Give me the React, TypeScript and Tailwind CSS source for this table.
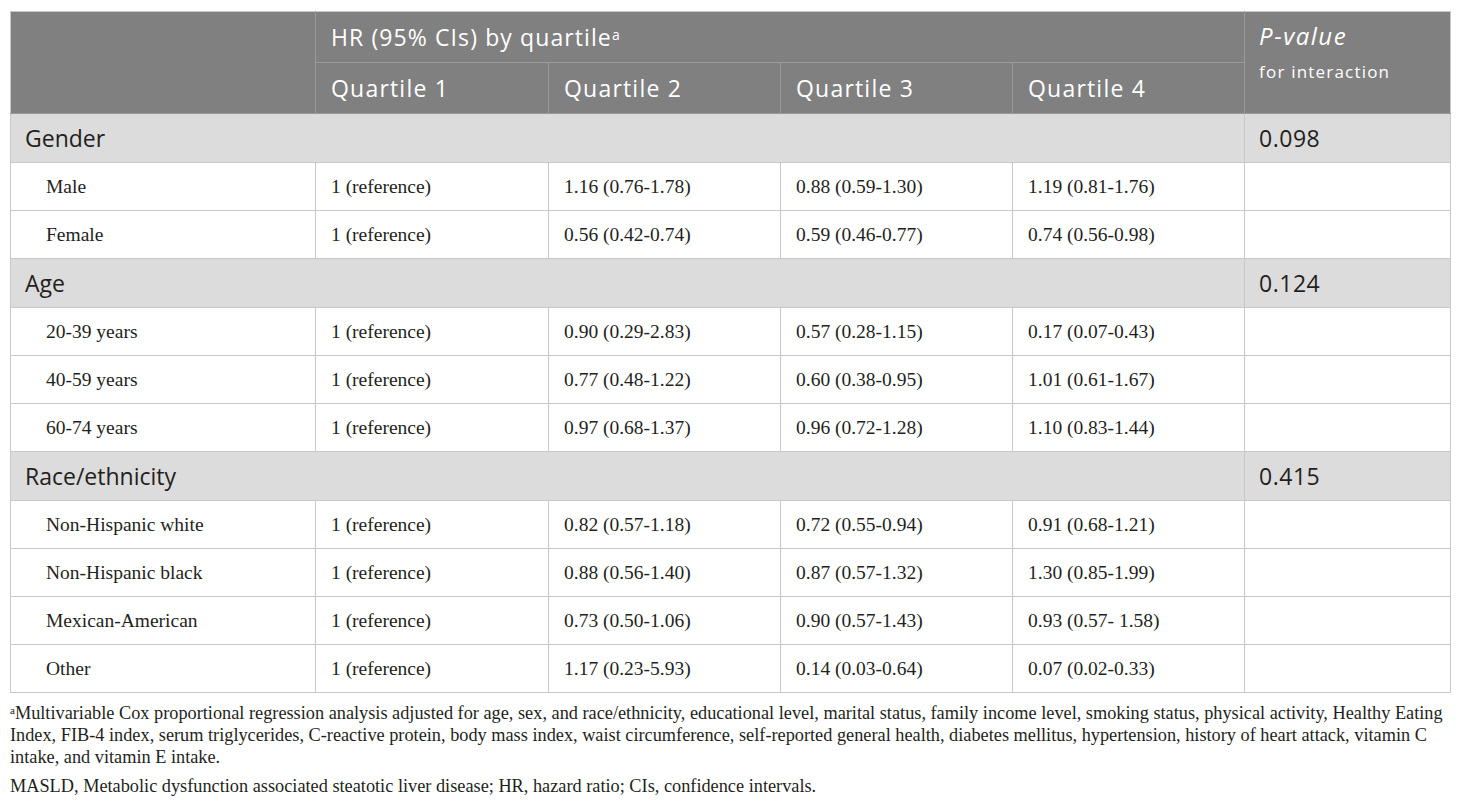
import React from 'react';

type Row = { label: string; q: [string, string, string, string] };
type Group = { name: string; p: string; rows: Row[] };

const groups: Group[] = [
  {
    name: 'Gender',
    p: '0.098',
    rows: [
      { label: 'Male', q: ['1 (reference)', '1.16 (0.76-1.78)', '0.88 (0.59-1.30)', '1.19 (0.81-1.76)'] },
      { label: 'Female', q: ['1 (reference)', '0.56 (0.42-0.74)', '0.59 (0.46-0.77)', '0.74 (0.56-0.98)'] },
    ],
  },
  {
    name: 'Age',
    p: '0.124',
    rows: [
      { label: '20-39 years', q: ['1 (reference)', '0.90 (0.29-2.83)', '0.57 (0.28-1.15)', '0.17 (0.07-0.43)'] },
      { label: '40-59 years', q: ['1 (reference)', '0.77 (0.48-1.22)', '0.60 (0.38-0.95)', '1.01 (0.61-1.67)'] },
      { label: '60-74 years', q: ['1 (reference)', '0.97 (0.68-1.37)', '0.96 (0.72-1.28)', '1.10 (0.83-1.44)'] },
    ],
  },
  {
    name: 'Race/ethnicity',
    p: '0.415',
    rows: [
      { label: 'Non-Hispanic white', q: ['1 (reference)', '0.82 (0.57-1.18)', '0.72 (0.55-0.94)', '0.91 (0.68-1.21)'] },
      { label: 'Non-Hispanic black', q: ['1 (reference)', '0.88 (0.56-1.40)', '0.87 (0.57-1.32)', '1.30 (0.85-1.99)'] },
      { label: 'Mexican-American', q: ['1 (reference)', '0.73 (0.50-1.06)', '0.90 (0.57-1.43)', '0.93 (0.57- 1.58)'] },
      { label: 'Other', q: ['1 (reference)', '1.17 (0.23-5.93)', '0.14 (0.03-0.64)', '0.07 (0.02-0.33)'] },
    ],
  },
];

const sans = "font-['Open_Sans','Noto_Sans',sans-serif]";
const serif = "font-['Liberation_Serif','Times_New_Roman',serif]";

export default function App() {
  return (
    <div className="min-h-screen bg-white pt-[11px] px-[10px] text-[#231f20]">
      <table className="table-fixed border-collapse w-[1440px]">
        <colgroup>
          <col className="w-[305px]" />
          <col className="w-[233px]" />
          <col className="w-[232px]" />
          <col className="w-[232px]" />
          <col className="w-[232px]" />
          <col className="w-[206px]" />
        </colgroup>
        <thead className={`${sans} text-white`}>
          <tr className="h-[51px] bg-[#808080]">
            <th rowSpan={2} className="border border-[#9a9a9a] border-t-[#c8c8c8] border-l-[#c8c8c8]" />
            <th colSpan={4} className="border border-[#9a9a9a] border-t-[#c8c8c8] px-[15px] text-left align-middle text-[23px] tracking-[1.1px] font-normal">
              HR (95% CIs) by quartile<sup className="text-[14px] tracking-normal relative -top-[6px]">a</sup>
            </th>
            <th rowSpan={2} className="border border-[#9a9a9a] border-t-[#c8c8c8] border-r-[#c8c8c8] px-[14px] pt-[10px] text-left align-top font-normal">
              <div className="text-[24px] italic tracking-[1.5px] leading-[28px]">P-value</div>
              <div className="text-[17px] tracking-[1.2px] leading-[22px] mt-[11px]">for interaction</div>
            </th>
          </tr>
          <tr className="h-[51px] bg-[#808080]">
            {['Quartile 1', 'Quartile 2', 'Quartile 3', 'Quartile 4'].map((q) => (
              <th key={q} className="border border-[#9a9a9a] px-[15px] text-left text-[23px] tracking-[1.2px] font-normal">
                {q}
              </th>
            ))}
          </tr>
        </thead>
        <tbody>
          {groups.map((g) => (
            <React.Fragment key={g.name}>
              <tr className={`h-[49px] bg-[#dcdcdc] ${sans} text-[23px]`}>
                <td colSpan={5} className="border border-[#c8c8c8] px-[14px]">
                  {g.name}
                </td>
                <td className="border border-[#c8c8c8] px-[14px] tracking-[0.5px]">{g.p}</td>
              </tr>
              {g.rows.map((r) => (
                <tr key={r.label} className={`h-[48px] ${serif} text-[19.5px]`}>
                  <td className="border border-[#c8c8c8] pl-[35px]">{r.label}</td>
                  {r.q.map((v, i) => (
                    <td key={i} className="border border-[#c8c8c8] px-[15px]">
                      {v}
                    </td>
                  ))}
                  <td className="border border-[#c8c8c8]" />
                </tr>
              ))}
            </React.Fragment>
          ))}
        </tbody>
      </table>
      <div className={`${serif} text-[18.3px] leading-[22px] mt-[9px] whitespace-nowrap`}>
        <p>
          <sup className="text-[11px]">a</sup>Multivariable Cox proportional regression analysis adjusted for age, sex, and race/ethnicity, educational level, marital status, family income level, smoking status, physical activity, Healthy Eating
          <br />
          Index, FIB-4 index, serum triglycerides, C-reactive protein, body mass index, waist circumference, self-reported general health, diabetes mellitus, hypertension, history of heart attack, vitamin C
          <br />
          intake, and vitamin E intake.
        </p>
        <p className="mt-[7px]">MASLD, Metabolic dysfunction associated steatotic liver disease; HR, hazard ratio; CIs, confidence intervals.</p>
      </div>
    </div>
  );
}
